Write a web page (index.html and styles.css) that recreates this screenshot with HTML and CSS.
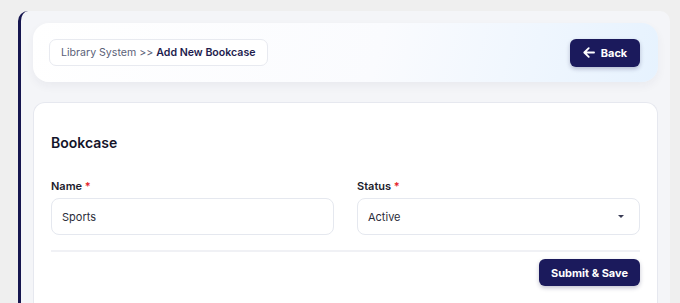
FILE: index.html
```html
<!DOCTYPE html>
<html lang="en">
<head>
    <meta charset="UTF-8">
    <meta name="viewport" content="width=device-width, initial-scale=1.0">
    <title>Add New Bookcase</title>
    <link rel="stylesheet" href="styles.css">
</head>
<body>
    <div class="page">
        <!-- Cabeçalho -->
        <div class="page-header">
            <div class="breadcrumb">
                <span class="crumb">Library System &gt;&gt;</span>
                <span class="crumb-current">Add New Bookcase</span>
            </div>
            <button class="btn btn-back">
                <svg width="12" height="11" viewBox="0 0 13 12" fill="none">
                    <path d="M12 6H1.8M6.2 1.2L1.4 6l4.8 4.8" stroke="#fff" stroke-width="2" stroke-linecap="round" stroke-linejoin="round"/>
                </svg>
                Back
            </button>
        </div>

        <!-- Formulário -->
        <div class="form-card">
            <h2 class="form-title">Bookcase</h2>
            <div class="form-grid">
                <div class="field">
                    <label class="field-label">Name <span class="required">*</span></label>
                    <div class="field-input">Sports</div>
                </div>
                <div class="field">
                    <label class="field-label">Status <span class="required">*</span></label>
                    <div class="field-input field-select">
                        Active
                        <span class="caret"></span>
                    </div>
                </div>
            </div>
            <div class="form-footer">
                <button class="btn btn-submit">Submit &amp; Save</button>
            </div>
        </div>
    </div>
</body>
</html>
```

FILE: styles.css
```css
body {
    font-family: Inter, 'Noto Sans', sans-serif;
    margin: 0;
    padding: 11px 10px 0 18px;
    background-color: #efefef;
    height: 303px;
    box-sizing: border-box;
    overflow: hidden;
}

/* Moldura da página */
.page {
    background-color: #f4f5f8;
    border-left: 3px solid #16164f;
    border-radius: 10px 10px 0 0;
    padding: 12px 12px 0 12px;
    height: 292px;
    box-sizing: border-box;
}

/* Cabeçalho */
.page-header {
    display: flex;
    align-items: center;
    justify-content: space-between;
    height: 59px;
    box-sizing: border-box;
    padding: 0 18px 0 16px;
    border-radius: 16px;
    background: linear-gradient(105deg, #ffffff 0%, #fafbfe 55%, #e6f2fe 100%);
    box-shadow: 0 4px 10px rgba(30, 40, 80, 0.05);
}

.breadcrumb {
    height: 27px;
    display: flex;
    align-items: center;
    padding: 0 11px;
    background-color: #fff;
    border: 1px solid #e8eaf0;
    border-radius: 7px;
    font-size: 10.6px;
    box-sizing: border-box;
}

.crumb {
    color: #5b5f78;
    margin-right: 3px;
}

.crumb-current {
    color: #1e1c4e;
    font-weight: 600;
}

.btn {
    font-family: inherit;
    border: none;
    color: #fff;
    background-color: #1b1a5c;
    font-weight: 700;
    font-size: 11px;
    cursor: pointer;
    display: flex;
    align-items: center;
    justify-content: center;
    box-shadow: 0 2px 4px rgba(20, 20, 70, 0.25);
}

.btn-back {
    width: 70px;
    height: 28px;
    border-radius: 6px;
    gap: 6px;
}

/* Card do formulário */
.form-card {
    margin-top: 20px;
    background-color: #fff;
    border: 1px solid #e6e8ef;
    border-bottom: none;
    border-radius: 12px 12px 0 0;
    padding: 30px 17px 0 17px;
    height: 201px;
    box-sizing: border-box;
}

.form-title {
    margin: 0;
    font-size: 14px;
    line-height: 20px;
    font-weight: 600;
    color: #14142a;
}

.form-grid {
    display: grid;
    grid-template-columns: 1fr 1fr;
    gap: 23px;
    margin-top: 26px;
}

.field-label {
    display: block;
    font-size: 11px;
    line-height: 14px;
    font-weight: 600;
    color: #1c1c2c;
    margin-bottom: 5px;
}

.required {
    color: #e5252a;
}

.field-input {
    height: 37px;
    box-sizing: border-box;
    border: 1px solid #e5e8ef;
    border-radius: 8px;
    padding: 0 10px;
    display: flex;
    align-items: center;
    font-size: 11px;
    color: #2b2d3a;
}

.field-select {
    justify-content: space-between;
    padding-right: 15px;
}

.caret {
    width: 0;
    height: 0;
    border-left: 3px solid transparent;
    border-right: 3px solid transparent;
    border-top: 3px solid #3a3c55;
}

.form-footer {
    margin-top: 15px;
    padding-top: 7px;
    border-top: 2px solid #f0f1f5;
    display: flex;
    justify-content: flex-end;
}

.btn-submit {
    width: 101px;
    height: 27px;
    border-radius: 6px;
}
```
